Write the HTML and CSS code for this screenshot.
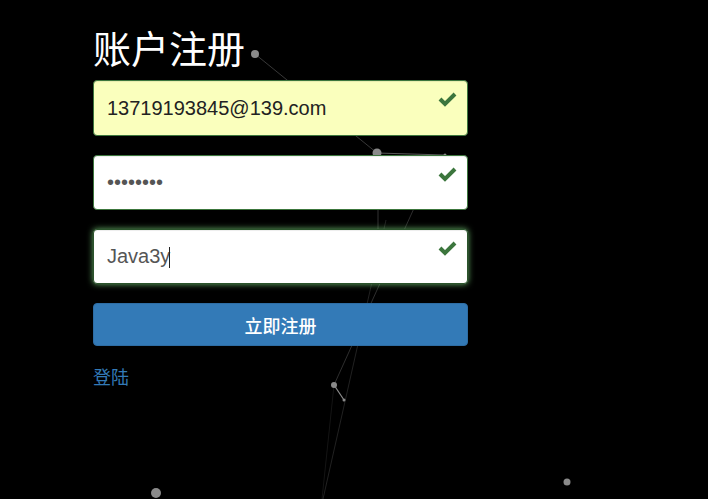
FILE: index.html
```html
<!DOCTYPE html>
<html lang="zh-CN">
<head>
<meta charset="utf-8">
<title>账户注册</title>
<link rel="stylesheet" href="styles.css">
</head>
<body>
<svg class="particles" width="708" height="499" viewBox="0 0 708 499" aria-hidden="true">
  <g stroke="#fff" fill="none">
    <line x1="255" y1="54" x2="377" y2="153" stroke-opacity="0.22" stroke-width="1"/>
    <line x1="377" y1="153" x2="445" y2="155" stroke-opacity="0.35" stroke-width="1"/>
    <line x1="378" y1="153" x2="378" y2="240" stroke-opacity="0.2" stroke-width="1"/>
    <line x1="420" y1="195" x2="334" y2="385" stroke-opacity="0.18" stroke-width="1"/>
    <line x1="386" y1="220" x2="323" y2="499" stroke-opacity="0.13" stroke-width="1"/>
    <line x1="334" y1="385" x2="344" y2="400" stroke-opacity="0.55" stroke-width="1.2"/>
    <line x1="334" y1="385" x2="322" y2="499" stroke-opacity="0.08" stroke-width="1"/>
  </g>
  <g fill="#8a8a8a">
    <circle cx="255" cy="54" r="4"/>
    <circle cx="377" cy="153" r="4.5"/>
    <circle cx="445" cy="155" r="1.5"/>
    <circle cx="334" cy="385" r="3"/>
    <circle cx="344" cy="400" r="1.5"/>
    <circle cx="156" cy="493" r="5"/>
    <circle cx="567" cy="482" r="3.5"/>
  </g>
</svg>

<main class="register">
  <h1 class="title">账户注册</h1>
  <form class="form">
    <div class="field field-first">
      <input class="input input-autofill" type="text" value="13719193845@139.com">
      <svg class="check" width="20" height="18" viewBox="0 0 20 18"><polyline points="2,9 7,14 17,4" /></svg>
    </div>
    <div class="field">
      <input class="input" type="password" value="12345678">
      <svg class="check" width="20" height="18" viewBox="0 0 20 18"><polyline points="2,9 7,14 17,4" /></svg>
    </div>
    <div class="field">
      <input class="input input-focus" type="text" value="Java3y">
      <span class="caret"></span>
      <svg class="check" width="20" height="18" viewBox="0 0 20 18"><polyline points="2,9 7,14 17,4" /></svg>
    </div>
    <button class="btn" type="button">立即注册</button>
    <a class="login" href="#">登陆</a>
  </form>
</main>
</body>
</html>
```
FILE: styles.css
```css
html, body {
  margin: 0;
  padding: 0;
  background: #000;
  height: 100%;
  overflow: hidden;
}

body {
  position: relative;
  font-family: "Liberation Sans", "Noto Sans CJK SC", sans-serif;
}

.particles {
  position: absolute;
  left: 0;
  top: 0;
  z-index: 0;
}

.register {
  position: relative;
  z-index: 1;
  width: 375px;
  padding: 21px 0 0 93px;
}

.title {
  margin: 0 0 7px;
  font-family: "Noto Sans CJK SC", sans-serif;
  font-size: 38px;
  font-weight: 400;
  line-height: 52px;
  color: #fff;
}

.form {
  display: flex;
  flex-direction: column;
}

.field {
  position: relative;
  margin-bottom: 19px;
}

.input {
  display: block;
  box-sizing: border-box;
  width: 375px;
  height: 55px;
  margin: 0;
  padding: 0 40px 0 13px;
  font-family: "Liberation Sans", sans-serif;
  font-size: 20px;
  color: #555;
  background: #fff;
  border: 1px solid #3c763d;
  border-radius: 4px;
  outline: none;
  box-shadow: inset 0 1px 1px rgba(0, 0, 0, 0.075);
}

.field-first .input {
  height: 56px;
}

.input-autofill {
  background: #faffbd;
  color: #222;
}

.input-focus {
  border-color: #2b542c;
  box-shadow: inset 0 1px 1px rgba(0, 0, 0, 0.075), 0 0 6px #67b168;
}

.caret {
  position: absolute;
  left: 76px;
  top: 18px;
  width: 1px;
  height: 21px;
  background: #222;
}

.check {
  position: absolute;
  right: 10px;
  top: 10px;
}

.check polyline {
  fill: none;
  stroke: #3c763d;
  stroke-width: 4;
  stroke-linecap: butt;
  stroke-linejoin: miter;
}

.btn {
  box-sizing: border-box;
  width: 375px;
  height: 43px;
  margin: 0;
  padding: 0;
  font-family: "Noto Sans CJK SC", sans-serif;
  font-size: 18px;
  font-weight: 500;
  color: #fff;
  background: #337ab7;
  border: 1px solid #2e6da4;
  border-radius: 4px;
}

.login {
  align-self: flex-start;
  margin-top: 17px;
  font-family: "Noto Sans CJK SC", sans-serif;
  font-size: 18px;
  line-height: 26px;
  color: #337ab7;
  text-decoration: none;
}
```
